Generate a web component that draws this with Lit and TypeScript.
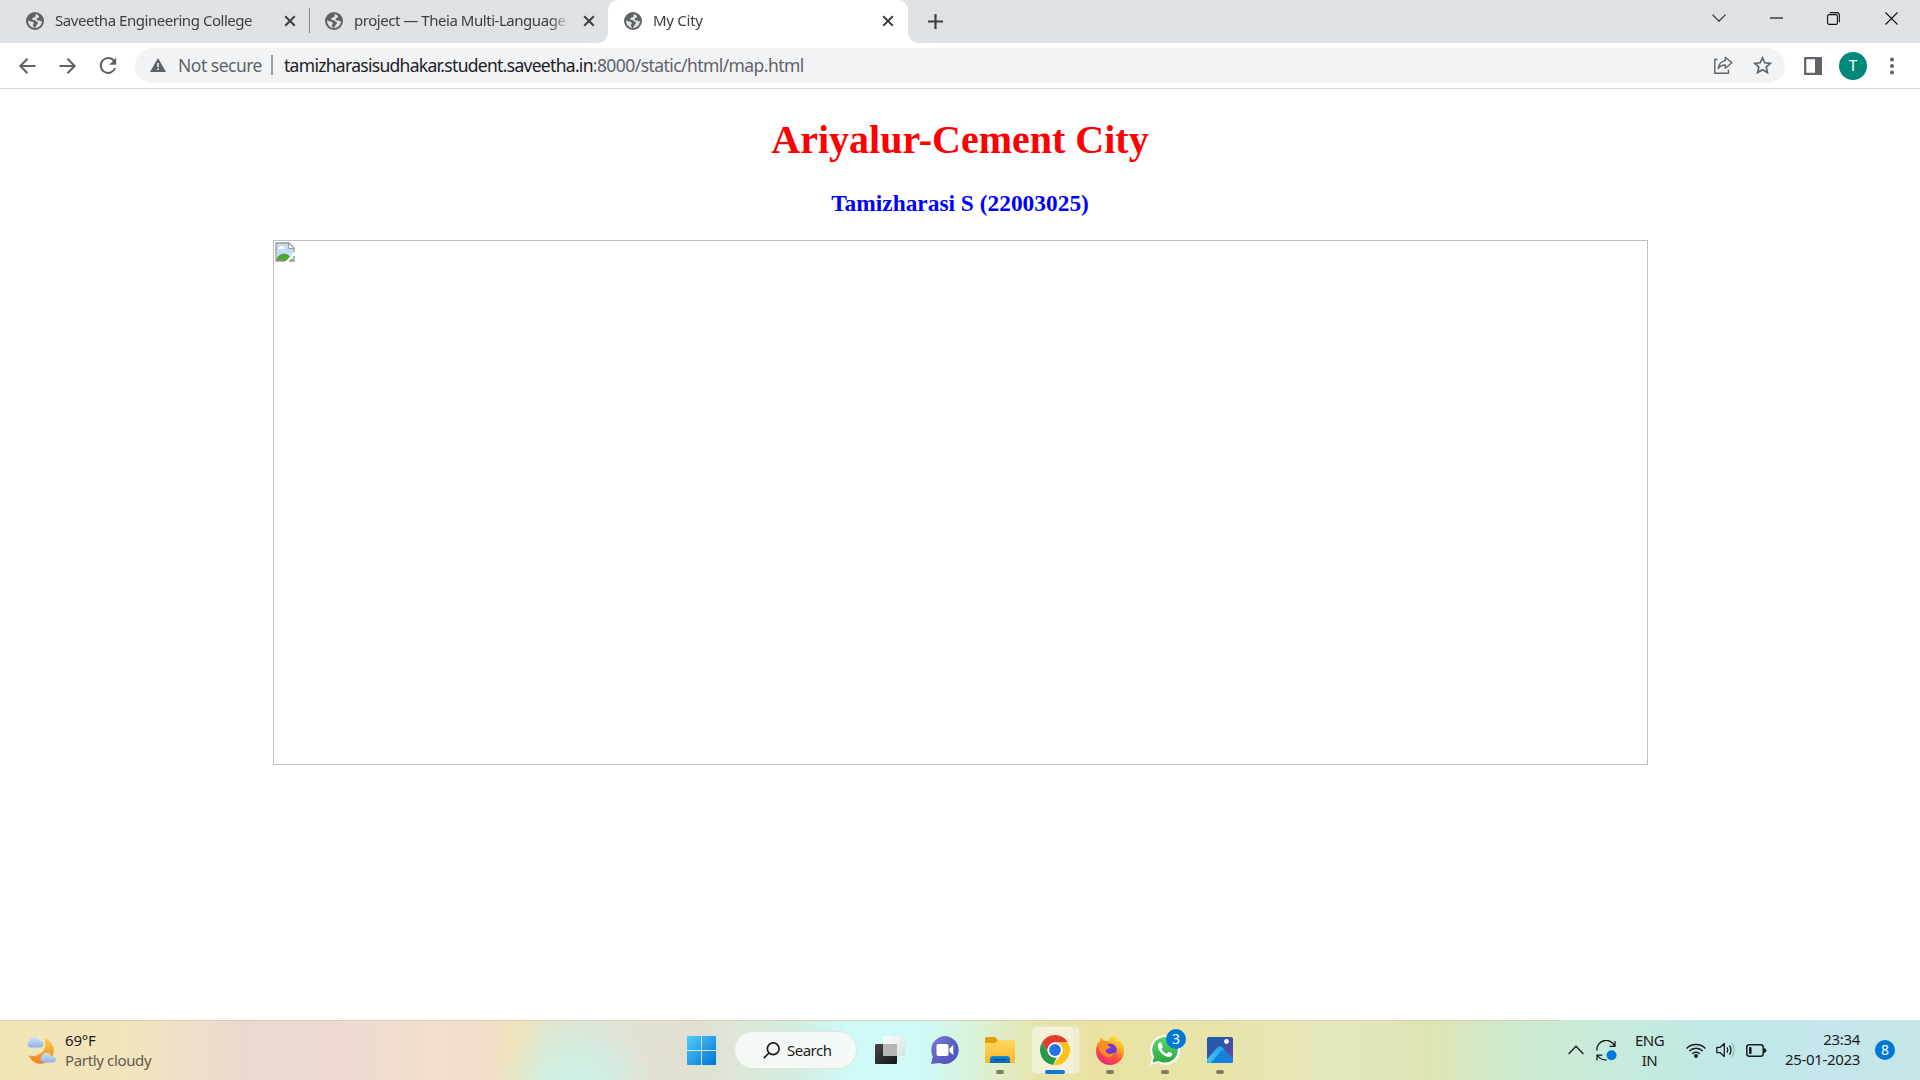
import { LitElement, html, css, svg, nothing } from "lit";
import { customElement, property } from "lit/decorators.js";

const globe = html`<svg class="globe" width="18" height="18" viewBox="0 0 18 18">
  <circle cx="9" cy="9" r="9" fill="#5f6368"/>
  <path d="M9.8 2C9.4 3.6 10 4.3 8.8 5.2C7.6 6 6.2 5.4 6.2 7C6.3 8.3 8.8 7.6 9.7 8.8C10.4 10 11.9 9.6 11.9 11C11.9 12.3 10.8 12.3 10.3 13.4C9.9 14.4 9.3 15.3 8.4 16A7 7 0 0 1 2.1 8.4L5.4 9.4C6.8 9.8 8 10.4 7.8 11.8C7.6 12.6 6.6 12.4 6.8 13.6L8.4 16C12.8 16 16 12.8 15.9 8.9C14.4 9.8 13.8 8.4 12.5 8.5C11 8.6 10.2 7.8 10.9 6.6C11.6 5.6 13 5.9 13.1 4.2C12.1 3 11 2.3 9.8 2Z" fill="#dee1e6"/>
</svg>`;

const cross = html`<svg width="12" height="12" viewBox="0 0 12 12"><path d="M1.2 1.2L10.8 10.8M10.8 1.2L1.2 10.8" stroke="#3c4043" stroke-width="2" fill="none"/></svg>`;

@customElement("browser-tab")
class BrowserTab extends LitElement {
  @property() label = "";
  @property({ type: Boolean, reflect: true }) active = false;
  static styles = css`
    :host { display: flex; box-sizing: border-box; align-items: center; width: 299px; height: 43px; padding: 0 13px 2px 16px; position: relative; }
    :host([active]) { background: #fff; border-radius: 10px 10px 0 0; width: 300px; padding-right: 14px; }
    :host([active])::before, :host([active])::after { content: ""; position: absolute; bottom: 0; width: 10px; height: 10px; }
    :host([active])::before { left: -10px; background: radial-gradient(circle at 0 0, transparent 9.5px, #fff 10px); }
    :host([active])::after { right: -10px; background: radial-gradient(circle at 100% 0, transparent 9.5px, #fff 10px); }
    svg { display: block; flex: none; }
    .label { flex: 1; margin: 0 12px 0 11px; height: 22px; line-height: 21px; overflow: hidden; white-space: nowrap; color: #3c4043; font-size: 15px; letter-spacing: -0.46px;
      -webkit-mask-image: linear-gradient(90deg, #000 calc(100% - 22px), transparent 100%); }
    :host([active]) .label { letter-spacing: -0.27px; }
  `;
  render() {
    return html`${globe}<span class="label">${this.label}</span>${cross}`;
  }
}

@customElement("browser-chrome")
class BrowserChrome extends LitElement {
  static styles = css`
    :host { display: block; }
    svg { display: block; flex: none; }
    .strip { display: flex; align-items: center; height: 43px; background: #dee1e6; padding-left: 10px; box-sizing: border-box; }
    .divider { width: 1px; height: 25px; background: #80868b; margin: 0 -1px 2px 0; }
    .plus { margin: 0 auto 1px 20px; }
    .controls { display: flex; align-items: center; padding: 0 0 7px; }
    .controls span { display: flex; width: 57.4px; justify-content: center; }
    .bar { display: flex; align-items: center; height: 46px; border-bottom: 1px solid #d5d7da; box-sizing: border-box; background: #fff; padding-left: 18px; }
    .nav { display: flex; gap: 20px; width: 117px; }
    .omni { display: flex; align-items: center; width: 1650px; height: 35px; border-radius: 18px; background: #f1f3f4; box-sizing: border-box; padding: 0 13px 0 15px; margin-bottom: 1px; font-size: 17.5px; white-space: nowrap; color: #5f6368; }
    .ns { margin-left: 12px; width: 93px; letter-spacing: -0.5px; }
    .sep { width: 2px; height: 20px; background: #9aa0a6; margin-right: 11px; }
    .url { letter-spacing: -0.57px; }
    .host { color: #202124; letter-spacing: -0.7px; }
    .share { margin-left: auto; margin-right: 20px; }
    .panel { margin-left: 19px; }
    .avatar { width: 28px; height: 28px; border-radius: 50%; background: #00897b; color: #fff; text-align: center; line-height: 28px; font-size: 15px; font-family: Roboto, sans-serif; margin: 0 22px 0 17px; }
  `;
  render() {
    return html`
      <div class="strip">
        <browser-tab label="Saveetha Engineering College"></browser-tab>
        <i class="divider"></i>
        <browser-tab label="project — Theia Multi-Language"></browser-tab>
        <browser-tab active label="My City"></browser-tab>
        <svg class="plus" width="15" height="15" viewBox="0 0 15 15"><path d="M7.5 0V15M0 7.5H15" stroke="#3c4043" stroke-width="2.2"/></svg>
        <div class="controls">
          <span><svg width="14" height="8" viewBox="0 0 14 8"><path d="M.5 .7L7 7.2L13.5 .7" fill="none" stroke="#222" stroke-width="1.1"/></svg></span>
          <span><svg width="13" height="2" viewBox="0 0 13 2"><path d="M0 1H13" stroke="#000" stroke-width="1.1"/></svg></span>
          <span><svg width="13" height="13" viewBox="0 0 13 13" fill="none" stroke="#111" stroke-width="1.1"><rect x=".6" y="2.6" width="9.8" height="9.8" rx="1.5"/><path d="M2.7 .6H9.6Q12.4 .6 12.4 3.4V10.3"/></svg></span>
          <span><svg width="13" height="13" viewBox="0 0 13 13"><path d="M.5 .5L12.5 12.5M12.5 .5L.5 12.5" stroke="#111" stroke-width="1.1"/></svg></span>
        </div>
      </div>
      <div class="bar">
        <div class="nav">
          <svg width="20" height="20" viewBox="0 0 20 20" fill="none" stroke="#5f6368" stroke-width="2"><path d="M17.5 10H3M9.5 2.8L2.3 10L9.5 17.2"/></svg>
          <svg width="20" height="20" viewBox="0 0 20 20" fill="none" stroke="#5f6368" stroke-width="2"><path d="M1.5 10H16M9.5 2.8L16.7 10L9.5 17.2"/></svg>
          <svg width="20" height="20" viewBox="0 0 20 20"><path d="M16.2 5.2A7.4 7.4 0 1 0 17.1 12" fill="none" stroke="#5f6368" stroke-width="2"/><path d="M18.2 1.8V8.8H11.2Z" fill="#5f6368"/></svg>
        </div>
        <div class="omni">
          <svg width="16" height="14" viewBox="0 0 16 14"><path d="M8 0L16 14H0Z" fill="#5f6368"/><path d="M8 5V9M8 10.3V12" stroke="#f1f3f4" stroke-width="1.6"/></svg>
          <span class="ns">Not secure</span><i class="sep"></i>
          <span class="url"><span class="host">tamizharasisudhakar.student.saveetha.in</span>:8000/static/html/map.html</span>
          <svg class="share" width="19" height="18" viewBox="0 0 19 18" fill="none" stroke="#5f6368" stroke-width="1.4"><path d="M3.5 3.5H.8V17.2H14.4V13.8"/><path d="M11.3 1.2L17.8 6.7L11.3 12.2V9C8 9 5.8 10 4.2 12.5C4.7 8.2 7.2 5.2 11.3 4.6Z" stroke-linejoin="round"/></svg>
          <svg width="19" height="18" viewBox="0 0 19 18"><path d="M9.5 1.8L11.8 6.8L17.3 7.4L13.2 11.1L14.4 16.6L9.5 13.8L4.6 16.6L5.8 11.1L1.7 7.4L7.2 6.8Z" fill="none" stroke="#5f6368" stroke-width="1.7"/></svg>
        </div>
        <svg class="panel" width="18" height="18" viewBox="0 0 18 18"><path d="M1.2 1.2H16.8V16.8H1.2Z" fill="none" stroke="#5f6368" stroke-width="2.2"/><path d="M11 0H18V18H11Z" fill="#5f6368"/></svg>
        <div class="avatar">T</div>
        <svg width="6" height="18" viewBox="0 0 6 18" fill="#5f6368"><circle cx="3" cy="2.6" r="2"/><circle cx="3" cy="9" r="2"/><circle cx="3" cy="15.4" r="2"/></svg>
      </div>`;
  }
}

const icons = {
  task: svg`<defs><linearGradient id="a" x2="1" y2="1"><stop stop-color="#474747"/><stop offset="1" stop-color="#151515"/></linearGradient><linearGradient id="b" x2="1" y2="1"><stop stop-color="#fff"/><stop offset="1" stop-color="#d8dcdc"/></linearGradient></defs>
    <rect x="0" y="9" width="22" height="20" rx="1" fill="url(#a)"/><rect x="8" y="1" width="22" height="20" rx="1" fill="url(#b)" opacity=".95"/><path d="M8 9H22V21H8Z" fill="#b5b7b7"/>`,
  chat: svg`<defs><linearGradient id="a" x2="1" y2="1"><stop stop-color="#8b78d8"/><stop offset=".4" stop-color="#6165c2"/><stop offset="1" stop-color="#4c4fb8"/></linearGradient></defs>
    <path d="M15 1A14 14 0 1 1 9.5 28L1 29L2.8 21.5A14 14 0 0 1 15 1Z" fill="url(#a)"/><rect x="6.5" y="9" width="12" height="12" rx="1.8" fill="#fff"/><path d="M19.5 13.5L23.3 10V20L19.5 16.8Z" fill="#fff"/>`,
  folder: svg`<defs><linearGradient id="a" x2="0" y2="1"><stop stop-color="#ffd75e"/><stop offset="1" stop-color="#f8b928"/></linearGradient><linearGradient id="b" x2="0" y2="1"><stop stop-color="#198bd8"/><stop offset="1" stop-color="#0566b5"/></linearGradient></defs>
    <path d="M0 3.5Q0 2 1.5 2H10L13 5H29Q30 5 30 6V15H0Z" fill="#e0a00b"/><path d="M0 8H10L13 5H29Q30 5 30 6V28H0Z" fill="url(#a)"/><path d="M5 28V24Q5 21 8 21H22Q25 21 25 24V28Z" fill="url(#b)"/><path d="M8.5 24.7H21.5" stroke="#064c87" stroke-width="1.3"/>`,
  chrome: svg`<circle cx="15" cy="15" r="15" fill="#fff"/><path d="M2 7.5A15 15 0 0 1 28 7.5H15A7.5 7.5 0 0 0 8.5 18.7Z" fill="#e33b2e"/><path d="M2 7.5L8.5 18.7A7.5 7.5 0 0 0 15 22.5L17 22L13 29.9A15 15 0 0 1 2 7.5Z" fill="#249b4a"/><path d="M15 7.5H28A15 15 0 0 1 13 29.9L21.5 18.7A7.5 7.5 0 0 0 15 7.5Z" fill="#fcc31d"/><circle cx="15" cy="15" r="7.5" fill="#fff"/><circle cx="15" cy="15" r="5.9" fill="#2673e8"/>`,
  firefox: svg`<defs><linearGradient id="a" x1=".8" y1="0" x2=".3" y2="1"><stop stop-color="#fff044"/><stop offset=".35" stop-color="#ffab22"/><stop offset=".65" stop-color="#ff4f3c"/><stop offset="1" stop-color="#e52782"/></linearGradient></defs>
    <path d="M18 0C21 2 22 4.5 23 6L24.5 5C28 8 29 12 29 16A14 14 0 0 1 1 16C1 12 2 9 5 6L5.5 2L9 5.5L14 6C15 3 16 1 18 0Z" fill="url(#a)"/><circle cx="15.2" cy="15" r="6.5" fill="#7037d2"/><path d="M2.5 8Q8 4.5 14.5 8Q10.5 9 14 11.2Q17 12.2 14 13.5Q9.5 14 11 17Q14 21 21 17Q15 26 8 20Q3 15 2.5 8Z" fill="#ff8b22"/>`,
  whatsapp: svg`<defs><linearGradient id="a" x2="0" y2="1"><stop stop-color="#60d66a"/><stop offset="1" stop-color="#29a844"/></linearGradient></defs>
    <path d="M0 30L2.2 22A15 15 0 1 1 8.2 28Z" fill="#fff"/><path d="M2.5 27.5L4.2 21.6A12.8 12.8 0 1 1 8.7 25.9Z" fill="url(#a)"/><path d="M8.3 8.6Q10 6.8 11.3 8.2L12.8 11.5Q12.9 12.7 11.4 14Q13.2 17.5 16.8 18.7L18.8 16.7L22.3 18.4Q22.6 20.6 20.5 21.7Q17.6 23 13.2 19.8Q6.2 14 8.3 8.6Z" fill="#fff"/>`,
  photos: svg`<defs><linearGradient id="a" x2="1" y2="1"><stop stop-color="#185fae"/><stop offset=".65" stop-color="#454da2"/><stop offset="1" stop-color="#7650b0"/></linearGradient><linearGradient id="b" x2="1" y2="0"><stop stop-color="#45c8f8"/><stop offset="1" stop-color="#1d9ae8"/></linearGradient></defs>
    <rect x="2" y="2" width="26" height="26" rx="2" fill="url(#a)"/><path d="M2 24.5L12.5 12.5Q15 10 17.5 12.5L28 24V26Q28 28 26 28H2Z" fill="#1580da"/><path d="M2 24.5L12.5 12.5Q15 10 17.5 12.5L20 15.3Q17.5 14.8 16 16.5L5.5 28H4Q2 28 2 26Z" fill="url(#b)"/><circle cx="21.5" cy="6.5" r="2.4" fill="#fff"/>`,
};

@customElement("task-icon")
class TaskIcon extends LitElement {
  @property() name: keyof typeof icons = "task";
  @property() badge = "";
  @property({ type: Boolean, reflect: true }) running = false;
  @property({ type: Boolean, reflect: true }) current = false;
  static styles = css`
    :host { display: flex; width: 55px; height: 60px; align-items: center; justify-content: center; position: relative; }
    svg { display: block; position: relative; overflow: visible; }
    :host([running])::after { content: ""; position: absolute; bottom: 6px; left: 24px; width: 8px; height: 4px; border-radius: 2px; background: #7e7b66; }
    :host([current])::after { left: 18px; width: 20px; background: #0a78d4; }
    .tile, .back { position: absolute; top: 6px; height: 48px; background: #f3f2d9; border: 1px solid #e6e5c6; border-radius: 5px; box-sizing: border-box; }
    .tile { left: 4px; width: 44px; }
    .back { left: 10px; width: 43px; background: #f0eecb; }
    .badge { position: absolute; left: 29px; top: 9px; width: 20px; height: 20px; line-height: 20px; border-radius: 50%; background: #0078d7; color: #fff; font-size: 14px; text-align: center; }
  `;
  render() {
    return html`${this.current ? html`<i class="back"></i><i class="tile"></i>` : nothing}
      <svg width="30" height="30" viewBox="0 0 30 30">${icons[this.name]}</svg>
      ${this.badge ? html`<span class="badge">${this.badge}</span>` : nothing}`;
  }
}

@customElement("task-bar")
class TaskBar extends LitElement {
  static styles = css`
    :host { display: flex; height: 60px; box-sizing: border-box; align-items: center; color: #1b1b1b; font-size: 15px; line-height: 20px; white-space: nowrap; position: relative;
      background: radial-gradient(ellipse 80px 60px at 575px 64px, #cbf5e8 0, rgba(203, 245, 232, 0) 100%), linear-gradient(90deg, #f1e4b6 0, #f2e5bc 130px, #ebd9d0 240px, #edd9d2 340px, #f1dfcb 430px, #f0ddcb 480px, #f0e2bd 510px, #ebe4bf 525px, #dde7d2 550px, #dae5d9 590px, #e2e0d2 650px, #e0dfd1 700px, #dce8da 740px, #d2ecdf 790px, #cffaf6 850px, #cffaf8 920px, #daf2d9 975px, #e5e5ab 1035px, #e9e2a3 1090px, #e8e4a8 1220px, #e5e6bb 1330px, #dfe4b4 1430px, #cdead0 1520px, #c6ebdc 1620px, #bfe8e7 1730px, #c5e6ed 1830px, #c3e6e4 1920px); }
    :host::before { content: ""; position: absolute; left: 0; top: 0; width: 1561px; height: 1px; background: #d2ccae; opacity: .75; }
    svg { display: block; flex: none; }
    .weather { display: flex; align-items: center; gap: 9px; width: 661px; padding-left: 26px; }
    .weather p { margin: 0; letter-spacing: -0.2px; }
    .weather .cond { color: #5f5a4c; letter-spacing: -0.35px; }
    .search { display: flex; align-items: center; box-sizing: border-box; width: 123px; height: 38px; margin: 0 5px 0 18px; padding-left: 28px; gap: 7px; border-radius: 19px; background: #f5f9f5; border: 1px solid #dbe8df; letter-spacing: -0.5px; }
    .tray { display: flex; align-items: center; margin-left: auto; width: 352px; }
    .lang { width: 65px; text-align: center; letter-spacing: -0.5px; }
    .clock { margin: 0 0 2px auto; text-align: right; letter-spacing: -0.33px; }
    .count { width: 20px; height: 20px; margin: 0 25px 0 15px; border-radius: 50%; background: #0078d7; color: #fff; text-align: center; font-size: 14px; }
    .sync { margin-left: 12px; }
    .wifi { margin-left: 4px; }
    .vol { margin-left: 10px; }
    .bat { margin-left: 10px; }
  `;
  render() {
    return html`
      <div class="weather">
        <svg width="30" height="29" viewBox="0 0 30 29">
          <defs><linearGradient id="m" x2="0" y2="1"><stop stop-color="#f7cb4d"/><stop offset="1" stop-color="#ee7f1d"/></linearGradient><linearGradient id="c" x2="0" y2="1"><stop stop-color="#d3e3fa"/><stop offset="1" stop-color="#8eb0e8"/></linearGradient></defs>
          <path d="M18.5 2.5C30 6 31 20 21 26C14 30 6 27 2.5 19.5C15 22 22 13 18.5 2.5Z" fill="url(#m)"/>
          <path d="M4 11.5A3.8 3.8 0 0 1 3.5 4.5Q5 0 9 1Q12.5 1 13.5 5Q17.5 5 17.5 8.5Q17 11.5 14 11.5Z" fill="url(#c)"/>
          <path d="M17 26.5A3.7 3.7 0 0 1 16 20Q18 15.5 22 17Q24.5 17.5 25.5 20.5Q29.7 20.2 30 23.5Q29.7 26.5 27 26.5Z" fill="url(#c)"/>
        </svg>
        <div><p>69°F</p><p class="cond">Partly cloudy</p></div>
      </div>
      <svg width="29" height="29" viewBox="0 0 29 29"><defs><linearGradient id="w" x2="1" y2="1"><stop stop-color="#4fcdfb"/><stop offset="1" stop-color="#0072d3"/></linearGradient></defs><path d="M1 0H14V14H0V1Q0 0 1 0ZM15 0H28Q29 0 29 1V14H15ZM0 15H14V29H1Q0 29 0 28ZM15 15H29V28Q29 29 28 29H15Z" fill="url(#w)"/></svg>
      <div class="search"><svg width="17" height="17" viewBox="0 0 17 17" fill="none" stroke="#1b1b1b" stroke-width="1.7"><circle cx="10.2" cy="6.8" r="5.9"/><path d="M6 11L.8 16.2"/></svg>Search</div>
      <task-icon name="task"></task-icon>
      <task-icon name="chat"></task-icon>
      <task-icon name="folder" running></task-icon>
      <task-icon name="chrome" running current></task-icon>
      <task-icon name="firefox" running></task-icon>
      <task-icon name="whatsapp" running badge="3"></task-icon>
      <task-icon name="photos" running></task-icon>
      <div class="tray">
        <svg width="16" height="10" viewBox="0 0 16 10"><path d="M.6 9L8 1.3L15.4 9" fill="none" stroke="#1b1b1b" stroke-width="1.3"/></svg>
        <svg class="sync" width="21" height="21" viewBox="0 0 21 21"><path d="M.9 10.5A9.2 9.2 0 0 1 18.5 6M19 1V6.3H13.5M1 20.5V15.2H6.5M1.5 15.5Q4.5 20 10.5 20" fill="none" stroke="#1b1b1b" stroke-width="1.3"/><circle cx="15.5" cy="15.3" r="5" fill="#0078d7"/></svg>
        <div class="lang">ENG<br>IN</div>
        <svg class="wifi" width="20" height="15" viewBox="0 0 20 15" fill="none" stroke="#1b1b1b" stroke-width="1.4"><path d="M.6 5.4A13.2 13.2 0 0 1 19.4 5.4M3.4 8.1A9.2 9.2 0 0 1 16.6 8.1M6.2 10.8A5.3 5.3 0 0 1 13.8 10.8"/><circle cx="10" cy="13" r="1.3" fill="#1b1b1b"/></svg>
        <svg class="vol" width="20" height="16" viewBox="0 0 20 16" fill="none" stroke="#1b1b1b" stroke-width="1.3"><path d="M.8 5.4H4L8.3 1.4V14.6L4 10.6H.8Z" stroke-linejoin="round"/><path d="M11 5.4Q12.6 8 11 10.6M13.5 3.3Q16.4 8 13.5 12.7"/><path d="M16 1.2Q20.2 8 16 14.8" stroke="#9fb8b8"/></svg>
        <svg class="bat" width="21" height="13" viewBox="0 0 21 13"><rect x=".8" y=".8" width="16.4" height="11.4" rx="2.4" fill="none" stroke="#1b1b1b" stroke-width="1.5"/><rect x="3" y="3" width="2.6" height="7" rx=".8" fill="#1b1b1b"/><path d="M18 4.2H18.7Q20.4 4.5 20.4 6.5T18.7 8.8H18Z" fill="#1b1b1b"/></svg>
        <div class="clock">23:34<br>25-01-2023</div>
        <div class="count">8</div>
      </div>`;
  }
}

@customElement("app-root")
class AppRoot extends LitElement {
  static styles = css`
    :host { display: flex; flex-direction: column; width: 1920px; height: 1080px; background: #fff; overflow: hidden; font-family: "Noto Sans", "Open Sans", sans-serif; }
    main { flex: 1; display: flex; flex-direction: column; align-items: center; font-family: "Liberation Serif", "Times New Roman", serif; }
    h1 { margin: 28px 0 0; font-size: 40px; line-height: 46px; color: #f00; }
    h3 { margin: 27px 0 0; font-size: 23.4px; line-height: 27px; color: #00f; }
    .picture { align-self: flex-start; box-sizing: border-box; width: 1375px; height: 525px; margin: 23px 0 0 273px; border: 1px solid #c0c0c0; padding: 1px; }
    .picture svg { display: block; }
  `;
  render() {
    return html`
      <browser-chrome></browser-chrome>
      <main>
        <h1>Ariyalur-Cement City</h1>
        <h3>Tamizharasi S (22003025)</h3>
        <div class="picture">
          <svg width="20" height="20" viewBox="0 0 20 20">
            <path d="M1 1H14L19 6V19H1Z" fill="#c5dbf7"/>
            <path d="M3 7Q3 5 5 5Q6 3 8 4.5Q10 5 10 7Z" fill="#fff"/>
            <path d="M1 19Q3 12 9 11.5Q15 12 18 19Z" fill="#4ba52f"/>
            <path d="M10 20L20 9V13.5L13.5 20Z" fill="#fff"/>
            <path d="M10 19H1V1H14L19 6V10M19 14V19H14" fill="none" stroke="#9b9b9b" stroke-width="1.3"/>
            <path d="M13.5 1V6.5H19Z" fill="#fff" stroke="#9b9b9b"/>
          </svg>
        </div>
      </main>
      <task-bar></task-bar>`;
  }
}
